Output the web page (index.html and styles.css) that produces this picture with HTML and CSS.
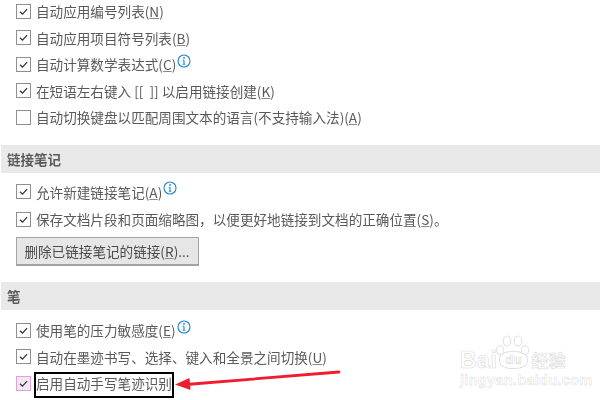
FILE: index.html
```html
<!DOCTYPE html>
<html lang="zh-CN">
<head>
<meta charset="utf-8">
<title>Options</title>
<link rel="stylesheet" href="styles.css">
</head>
<body>
<main class="page">
  <section class="list list-first">
    <label class="row"><span class="box"><svg viewBox="0 0 14 14"><path d="M3.2 7.2l2.7 2.6 5-5.4"/></svg></span><span>自动应用编号列表(<u>N</u>)</span></label>
    <label class="row"><span class="box"><svg viewBox="0 0 14 14"><path d="M3.2 7.2l2.7 2.6 5-5.4"/></svg></span><span>自动应用项目符号列表(<u>B</u>)</span></label>
    <label class="row"><span class="box"><svg viewBox="0 0 14 14"><path d="M3.2 7.2l2.7 2.6 5-5.4"/></svg></span><span>自动计算数学表达式(<u>C</u>)</span><svg class="info" viewBox="0 0 14 14"><circle cx="7" cy="7" r="6"/><path d="M7 6.2v4M5.8 10.2h2.4M5.8 6.2H7"/><circle class="dot" cx="7" cy="3.9" r=".9"/></svg></label>
    <label class="row"><span class="box"><svg viewBox="0 0 14 14"><path d="M3.2 7.2l2.7 2.6 5-5.4"/></svg></span><span>在短语左右键入 [[&nbsp;&nbsp;]] 以启用链接创建(<u>K</u>)</span></label>
    <label class="row"><span class="box"></span><span>自动切换键盘以匹配周围文本的语言(不支持输入法)(<u>A</u>)</span></label>
  </section>

  <h2 class="band band-links">链接笔记</h2>
  <section class="list list-links">
    <label class="row"><span class="box"><svg viewBox="0 0 14 14"><path d="M3.2 7.2l2.7 2.6 5-5.4"/></svg></span><span>允许新建链接笔记(<u>A</u>)</span><svg class="info" viewBox="0 0 14 14"><circle cx="7" cy="7" r="6"/><path d="M7 6.2v4M5.8 10.2h2.4M5.8 6.2H7"/><circle class="dot" cx="7" cy="3.9" r=".9"/></svg></label>
    <label class="row"><span class="box"><svg viewBox="0 0 14 14"><path d="M3.2 7.2l2.7 2.6 5-5.4"/></svg></span><span>保存文档片段和页面缩略图，以便更好地链接到文档的正确位置(<u>S</u>)。</span></label>
    <button class="btn" type="button">删除已链接笔记的链接(<u>R</u>)...</button>
  </section>

  <h2 class="band band-pen">笔</h2>
  <section class="list list-pen">
    <label class="row"><span class="box"><svg viewBox="0 0 14 14"><path d="M3.2 7.2l2.7 2.6 5-5.4"/></svg></span><span>使用笔的压力敏感度(<u>E</u>)</span><svg class="info" viewBox="0 0 14 14"><circle cx="7" cy="7" r="6"/><path d="M7 6.2v4M5.8 10.2h2.4M5.8 6.2H7"/><circle class="dot" cx="7" cy="3.9" r=".9"/></svg></label>
    <label class="row"><span class="box"><svg viewBox="0 0 14 14"><path d="M3.2 7.2l2.7 2.6 5-5.4"/></svg></span><span>自动在墨迹书写、选择、键入和全景之间切换(<u>U</u>)</span></label>
    <label class="row"><span class="box box-pink"><svg viewBox="0 0 14 14"><path d="M3.2 7.2l2.7 2.6 5-5.4"/></svg></span><span>启用自动手写笔迹识别</span></label>
  </section>
</main>

<div class="callout"></div>
<svg class="arrow" viewBox="0 0 600 400"><path class="arrow-line" d="M339 372L186 384.500"/><path class="arrow-head" d="M175 384.500L189.500 378L190.500 390z"/></svg>
<div class="mark">
  <svg class="paw" viewBox="0 0 34 30"><ellipse cx="5" cy="15" rx="3.600" ry="4.600"/><ellipse cx="12" cy="6" rx="3.800" ry="5"/><ellipse cx="23" cy="6" rx="3.800" ry="5"/><ellipse cx="30" cy="15" rx="3.600" ry="4.600"/></svg>
  <div class="mark-top"><span>Bai</span><span class="du">du</span><span class="cn">经验</span></div>
  <div class="mark-url">jingyan.baidu.com</div>
</div>
</body>
</html>
```

FILE: styles.css
```css
* { box-sizing: border-box; }
html, body { margin: 0; height: 400px; overflow: hidden; background: #fff; }
body { position: relative; font-family: "Noto Sans CJK SC", "Noto Sans", sans-serif; color: #5a5a5a; font-size: 13.6px; }
.page { width: 600px; padding-left: 1px; }
u { text-underline-offset: 1px; text-decoration-thickness: 1px; text-decoration-color: #8a8a8a; }
.list { padding-left: 14.5px; display: flex; flex-direction: column; }
.list-first { margin-top: -2px; }
.list-links { padding-top: 6px; gap: 1px; }
.list-pen { padding-top: 7.5px; }
.row { display: flex; align-items: center; height: 26.5px; filter: blur(.25px); }
.box { width: 15px; height: 15px; border: 1px solid #8f8f8f; background: #fff; margin-right: 5.5px; flex: none; display: flex; }
.box svg { width: 13px; height: 13px; fill: none; stroke: #333; stroke-width: 1.400; }
.box-pink { background: #f6e6f4; border-color: #d9a6d3; }
.info { width: 14px; height: 14px; margin: -7px 0 0 1px; fill: none; stroke: #1f85d0; stroke-width: 1.100; }
.info .dot { fill: #1f85d0; stroke: none; }
.band { margin: 0; background: #e9e9e9; height: 28px; line-height: 28px; padding-left: 6px; font-size: 13.5px; font-weight: 700; color: #5a5a5a; filter: blur(.25px); }
.band-links { margin-top: 14px; }
.band-pen { margin-top: 16px; }
.btn { width: 183px; height: 29px; margin-top: 3px; padding: 0; background: #e6e6e6; border: 1px solid #a3a3a3; border-bottom-width: 2px; font: inherit; color: #4a4a4a; text-align: center; filter: blur(.25px); }
.callout { position: absolute; left: 34px; top: 372px; width: 140px; height: 26px; border: 2px solid #000; }
.arrow { position: absolute; left: 0; top: 0; width: 600px; height: 400px; pointer-events: none; }
.arrow-line { stroke: #ee1c2e; stroke-width: 2.800; fill: none; stroke-linecap: round; }
.arrow-head { fill: #ee1c2e; }
.mark { position: absolute; left: 460px; top: 335px; width: 110px; height: 60px; }
.paw { position: absolute; left: 35px; top: 0; width: 34px; height: 30px; fill: #fff; stroke: #e4e4e4; stroke-width: 1.200; }
.mark-top { position: absolute; left: 0; top: 13px; display: flex; align-items: center; font: 700 23px/24px "Liberation Sans", sans-serif; letter-spacing: .5px; color: #fff; -webkit-text-stroke: .7px #dedede; }
.du { margin-left: 2px; font-size: 13px; background: #fff; border: 1px solid #e0e0e0; border-radius: 45%; padding: 0 5px; line-height: 16px; }
.cn { margin-left: 3px; font: 700 17px/24px "Noto Sans CJK SC", sans-serif; }
.mark-url { position: absolute; left: 0; top: 37px; font: 700 14.5px/16px "Liberation Sans", sans-serif; letter-spacing: .3px; color: #fff; -webkit-text-stroke: .5px #dedede; white-space: nowrap; }
```
